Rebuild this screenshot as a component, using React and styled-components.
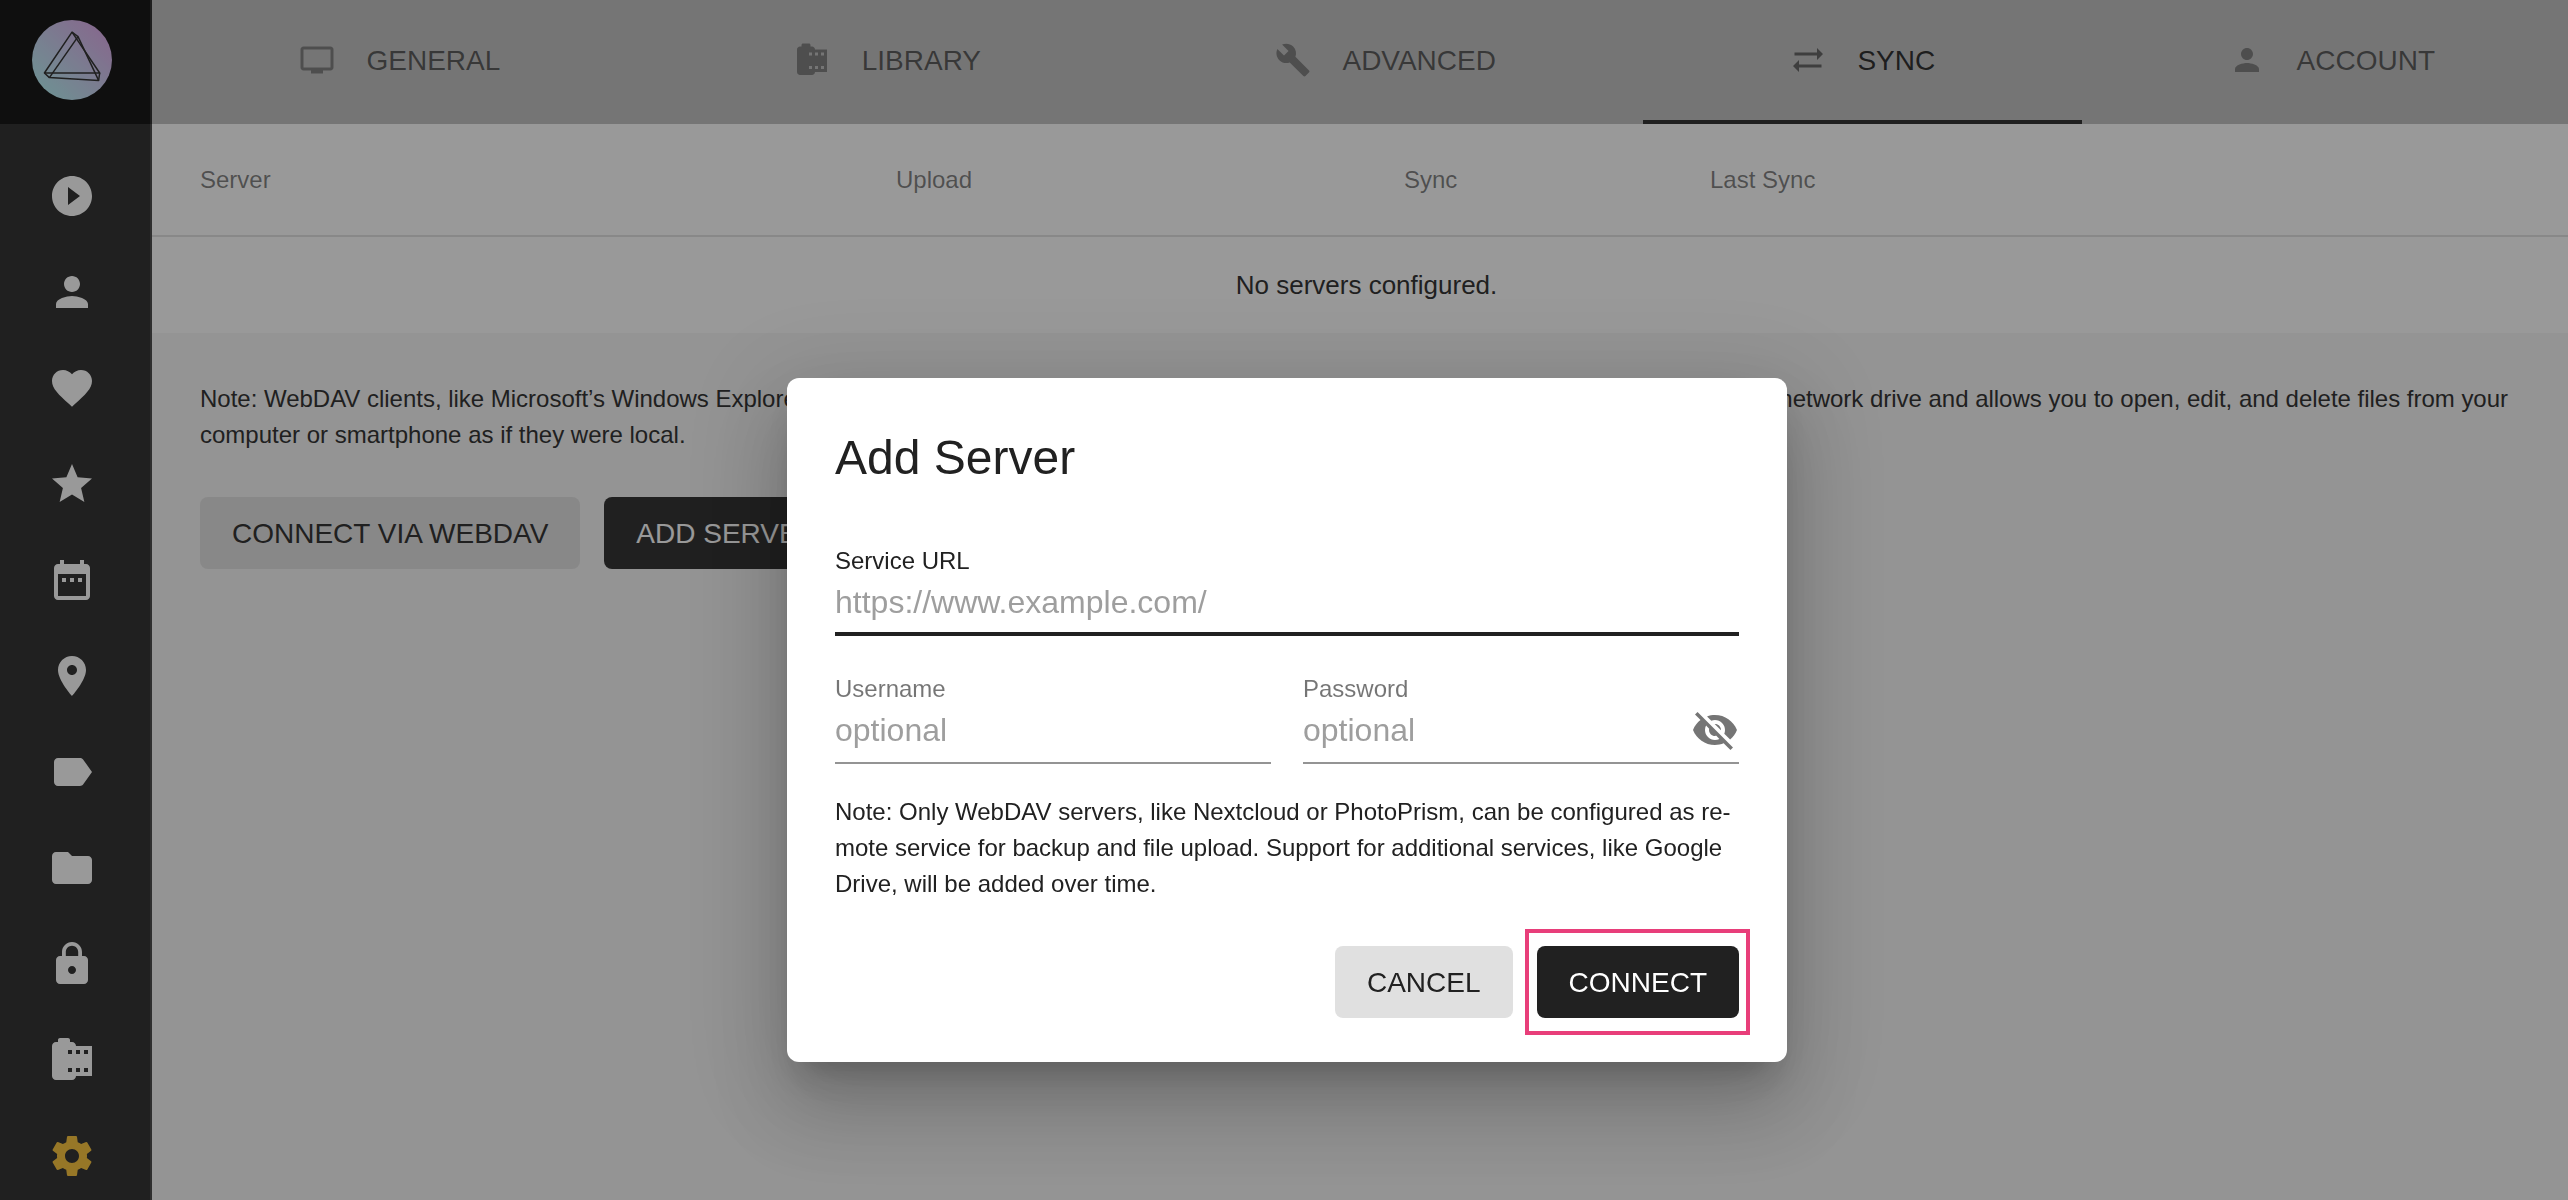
import React from "react";
import styled, { createGlobalStyle } from "styled-components";

const GlobalStyle = createGlobalStyle`
  * { box-sizing: border-box; }
  html, body { margin: 0; padding: 0; }
  body {
    width: 2568px;
    height: 1200px;
    overflow: hidden;
    font-family: "Liberation Sans", Arial, Helvetica, sans-serif;
    color: #212121;
    background: #f5f5f5;
  }
`;

const paths = {
  play: "M12 2C6.48 2 2 6.48 2 12s4.48 10 10 10 10-4.48 10-10S17.52 2 12 2zm-2 14.5v-9l6 4.5-6 4.5z",
  person: "M12 12c2.21 0 4-1.79 4-4s-1.79-4-4-4-4 1.79-4 4 1.79 4 4 4zm0 2c-2.67 0-8 1.34-8 4v2h16v-2c0-2.66-5.33-4-8-4z",
  favorite: "M12 21.35l-1.45-1.32C5.4 15.36 2 12.28 2 8.5 2 5.42 4.42 3 7.5 3c1.74 0 3.41.81 4.5 2.09C13.09 3.81 14.76 3 16.5 3 19.58 3 22 5.42 22 8.5c0 3.78-3.4 6.86-8.55 11.54L12 21.35z",
  star: "M12 17.27L18.18 21l-1.64-7.03L22 9.24l-7.19-.61L12 2 9.19 8.63 2 9.24l5.46 4.73L5.82 21z",
  calendar: "M9 11H7v2h2v-2zm4 0h-2v2h2v-2zm4 0h-2v2h2v-2zm2-7h-1V2h-2v2H8V2H6v2H5c-1.11 0-1.99.9-1.99 2L3 20c0 1.1.89 2 2 2h14c1.1 0 2-.9 2-2V6c0-1.1-.9-2-2-2zm0 16H5V9h14v11z",
  place: "M12 2C8.13 2 5 5.13 5 9c0 5.25 7 13 7 13s7-7.75 7-13c0-3.87-3.13-7-7-7zm0 9.5c-1.38 0-2.5-1.12-2.5-2.5s1.12-2.5 2.5-2.5 2.5 1.12 2.5 2.5-1.12 2.5-2.5 2.5z",
  label: "M17.63 5.84C17.27 5.33 16.67 5 16 5L5 5.01C3.9 5.01 3 5.9 3 7v10c0 1.1.9 1.99 2 1.99L16 19c.67 0 1.27-.33 1.63-.84L22 12l-4.37-6.16z",
  folder: "M10 4H4c-1.1 0-1.99.9-1.99 2L2 18c0 1.1.9 2 2 2h16c1.1 0 2-.9 2-2V8c0-1.1-.9-2-2-2h-8l-2-2z",
  lock: "M18 8h-1V6c0-2.76-2.24-5-5-5S7 3.24 7 6v2H6c-1.1 0-2 .9-2 2v10c0 1.1.9 2 2 2h12c1.1 0 2-.9 2-2V10c0-1.1-.9-2-2-2zm-6 9c-1.1 0-2-.9-2-2s.9-2 2-2 2 .9 2 2-.9 2-2 2zm3.1-9H8.9V6c0-1.71 1.39-3.1 3.1-3.1 1.71 0 3.1 1.39 3.1 3.1v2z",
  cameraRoll: "M14 5c0-1.1-.9-2-2-2h-1V2c0-.55-.45-1-1-1H6c-.55 0-1 .45-1 1v1H4c-1.1 0-2 .9-2 2v15c0 1.1.9 2 2 2h8c1.1 0 2-.9 2-2h8V5h-8zm-2 13h-2v-2h2v2zm0-9h-2V7h2v2zm4 9h-2v-2h2v2zm0-9h-2V7h2v2zm4 9h-2v-2h2v2zm0-9h-2V7h2v2z",
  settings: "M19.43 12.98c.04-.32.07-.64.07-.98s-.03-.66-.07-.98l2.11-1.65c.19-.15.24-.42.12-.64l-2-3.46c-.12-.22-.39-.3-.61-.22l-2.49 1c-.52-.4-1.08-.73-1.69-.98l-.38-2.65C14.46 2.18 14.25 2 14 2h-4c-.25 0-.46.18-.49.42l-.38 2.65c-.61.25-1.17.59-1.69.98l-2.49-1c-.23-.09-.49 0-.61.22l-2 3.46c-.13.22-.07.49.12.64l2.11 1.65c-.04.32-.07.65-.07.98s.03.66.07.98l-2.11 1.65c-.19.15-.24.42-.12.64l2 3.46c.12.22.39.3.61.22l2.49-1c.52.4 1.08.73 1.69.98l.38 2.65c.03.24.24.42.49.42h4c.25 0 .46-.18.49-.42l.38-2.65c.61-.25 1.17-.59 1.69-.98l2.49 1c.23.09.49 0 .61-.22l2-3.46c.12-.22.07-.49-.12-.64l-2.11-1.65zM12 15.5c-1.93 0-3.5-1.57-3.5-3.5s1.57-3.5 3.5-3.5 3.5 1.57 3.5 3.5-1.57 3.5-3.5 3.5z",
  tv: "M21 3H3c-1.1 0-2 .9-2 2v12c0 1.1.9 2 2 2h5v2h8v-2h5c1.1 0 1.99-.9 1.99-2L23 5c0-1.1-.9-2-2-2zm0 14H3V5h18v12z",
  build: "M22.7 19l-9.1-9.1c.9-2.3.4-5-1.5-6.9-2-2-5-2.4-7.4-1.3L9 6 6 9 1.6 4.7C.4 7.1.9 10.1 2.9 12.1c1.9 1.9 4.6 2.4 6.9 1.5l9.1 9.1c.4.4 1 .4 1.4 0l2.3-2.3c.5-.4.5-1.1.1-1.4z",
  syncAlt: "M22 8l-4-4v3H3v2h15v3l4-4zM2 16l4 4v-3h15v-2H6v-3l-4 4z",
  visibilityOff: "M12 7c2.76 0 5 2.24 5 5 0 .65-.13 1.26-.36 1.83l2.92 2.92c1.51-1.26 2.7-2.89 3.43-4.75-1.73-4.39-6-7.5-11-7.5-1.4 0-2.74.25-3.98.7l2.16 2.16C10.74 7.13 11.35 7 12 7zM2 4.27l2.28 2.28.46.46C3.08 8.3 1.78 10.02 1 12c1.73 4.39 6 7.5 11 7.5 1.55 0 3.03-.3 4.38-.84l.42.42L19.73 22 21 20.73 3.27 3 2 4.27zM7.53 9.8l1.55 1.55c-.05.21-.08.43-.08.65 0 1.66 1.34 3 3 3 .22 0 .44-.03.65-.08l1.55 1.55c-.67.33-1.41.53-2.2.53-2.76 0-5-2.24-5-5 0-.79.2-1.53.53-2.2zm4.31-.78l3.15 3.15.02-.16c0-1.66-1.34-3-3-3l-.17.01z",
};

const IconSvg = styled.svg`
  display: block;
  flex: none;
  width: ${(p) => p.$size}px;
  height: ${(p) => p.$size}px;
  fill: currentColor;
`;

const Icon = ({ name, size = 48 }) => (
  <IconSvg viewBox="0 0 24 24" $size={size}>
    <path d={paths[name]} />
  </IconSvg>
);

const Shell = styled.div`
  display: flex;
  width: 2568px;
  height: 1200px;
  overflow: hidden;
`;

const Sidebar = styled.nav`
  flex: none;
  width: 152px;
  height: 1200px;
  overflow: hidden;
  background: #212121;
`;

const Brand = styled.div`
  height: 124px;
  padding: 20px 0 0 32px;
  background: #000;
  border-right: 2px solid rgba(255, 255, 255, 0.12);
`;

const BrandLogo = styled.svg`
  display: block;
  width: 80px;
  height: 80px;
`;

const NavList = styled.div`
  height: 1076px;
  padding-top: 24px;
  border-right: 2px solid rgba(255, 255, 255, 0.12);
`;

const NavItem = styled.a`
  display: flex;
  align-items: center;
  height: 96px;
  padding-left: 48px;
  color: ${(p) => (p.$active ? "#fbc02d" : "#fff")};
`;

const Main = styled.main`
  flex: 1;
  min-width: 0;
  overflow: hidden;
`;

const Tabs = styled.div`
  display: flex;
  width: 2430px;
  height: 124px;
  background: #bdbdbd;
`;

const Tab = styled.a`
  flex: 1 1 auto;
  display: flex;
  align-items: center;
  justify-content: center;
  gap: 31.5px;
  padding: 0 24px 4px;
  font-size: 28px;
  line-height: 32px;
  color: rgba(0, 0, 0, ${(p) => (p.$active ? 0.87 : 0.61)});
  box-shadow: ${(p) => (p.$active ? "inset 0 -4px #212121" : "none")};

  svg {
    color: rgba(0, 0, 0, ${(p) => (p.$active ? 0.54 : 0.38)});
  }
`;

const TabText = styled.span`
  padding-top: 2px;
`;

const Table = styled.section`
  background: #fff;
`;

const TableHead = styled.div`
  display: grid;
  grid-template-columns: 696px 508px 306px 1fr;
  align-items: center;
  height: 113px;
  padding-left: 48px;
  border-bottom: 2px solid rgba(0, 0, 0, 0.12);
  font-size: 24px;
  color: rgba(0, 0, 0, 0.54);
`;

const EmptyRow = styled.div`
  display: flex;
  align-items: center;
  justify-content: center;
  height: 96px;
  padding-left: 13px;
  font-size: 26px;
`;

const Body = styled.section`
  padding: 48px;
`;

const Note = styled.p`
  margin: 0;
  font-size: 24px;
  line-height: 36px;
`;

const Line = styled.span`
  display: block;
  white-space: nowrap;
  letter-spacing: ${(p) => (p.$tight ? "-0.015px" : "normal")};
`;

const Actions = styled.div`
  display: flex;
  justify-content: ${(p) => (p.$end ? "flex-end" : "flex-start")};
  gap: 24px;
  margin-top: 44px;
`;

const Button = styled.button`
  height: 72px;
  padding: 2px 32px 0;
  border: 0;
  border-radius: 8px;
  font: 28px "Liberation Sans", Arial, Helvetica, sans-serif;
  white-space: nowrap;
  color: ${(p) => (p.$dark ? "#fff" : "#212121")};
  background: ${(p) => (p.$dark ? "#212121" : "#e0e0e0")};
`;

const Overlay = styled.div`
  position: fixed;
  inset: 0;
  display: flex;
  align-items: flex-start;
  justify-content: center;
  padding: 378px 0 0 6px;
  background: rgba(33, 33, 33, 0.46);
`;

const Dialog = styled.form`
  width: 1000px;
  height: 684px;
  padding: 48px;
  border-radius: 12px;
  background: #fff;
  box-shadow: 0 22px 30px -14px rgba(0, 0, 0, 0.2),
    0 48px 76px 6px rgba(0, 0, 0, 0.14), 0 18px 92px 16px rgba(0, 0, 0, 0.12);
`;

const Title = styled.h1`
  margin: 0 0 46px;
  font-size: 48px;
  line-height: 64px;
  font-weight: 400;
`;

const Fields = styled.div`
  display: grid;
  grid-template-columns: 1fr 1fr;
  column-gap: 32px;
`;

const Field = styled.label`
  display: flex;
  flex-direction: column;
  grid-column: ${(p) => (p.$wide ? "1 / -1" : "auto")};
  height: ${(p) => (p.$wide ? 128 : 130)}px;
`;

const FieldLabel = styled.span`
  height: 40px;
  padding-top: 7px;
  font-size: 24px;
  line-height: 36px;
  color: ${(p) => (p.$focused ? "#212121" : "rgba(0, 0, 0, 0.54)")};
`;

const InputRow = styled.span`
  display: flex;
  align-items: center;
  justify-content: space-between;
  height: 60px;
  padding-bottom: ${(p) => (p.$focused ? 4 : 6)}px;
  border-bottom: ${(p) => (p.$focused ? "4px solid #212121" : "2px solid #949494")};
  color: rgba(0, 0, 0, 0.54);
`;

const Placeholder = styled.span`
  font-size: 32px;
  line-height: 40px;
  color: #9e9e9e;
`;

const Highlighted = styled.div`
  position: relative;
`;

const Highlight = styled.span`
  position: absolute;
  inset: -17px -11px -17px -12px;
  border: 4px solid #e83e7a;
`;

const Logo = () => (
  <BrandLogo viewBox="0 0 80 80">
    <defs>
      <linearGradient id="brand" x1="0.15" y1="0.85" x2="0.85" y2="0.15">
        <stop offset="0" stopColor="#b4ebf3" />
        <stop offset="1" stopColor="#d9abea" />
      </linearGradient>
    </defs>
    <circle cx="40" cy="40" r="40" fill="url(#brand)" />
    <g fill="none" stroke="#212121" strokeWidth="1.5" strokeLinejoin="round">
      <path d="M40 12.2L12.4 53H67.7Z" />
      <path d="M46 16.6L17.4 57.6L66.6 60.4Z" />
      <path d="M40 12.2L46 16.6M12.4 53L17.4 57.6M67.7 53L66.6 60.4" />
    </g>
  </BrandLogo>
);

const nav = ["play", "person", "favorite", "star", "calendar", "place", "label", "folder", "lock", "cameraRoll", "settings"];

const tabs = [
  ["tv", "GENERAL"],
  ["cameraRoll", "LIBRARY"],
  ["build", "ADVANCED"],
  ["syncAlt", "SYNC"],
  ["person", "ACCOUNT"],
];

export default function App() {
  return (
    <>
      <GlobalStyle />
      <Shell>
        <Sidebar>
          <Brand>
            <Logo />
          </Brand>
          <NavList>
            {nav.map((name) => (
              <NavItem key={name} $active={name === "settings"}>
                <Icon name={name} />
              </NavItem>
            ))}
          </NavList>
        </Sidebar>
        <Main>
          <Tabs>
            {tabs.map(([icon, text]) => (
              <Tab key={text} $active={text === "SYNC"}>
                <Icon name={icon} size={36} />
                <TabText>{text}</TabText>
              </Tab>
            ))}
          </Tabs>
          <Table>
            <TableHead>
              <span>Server</span>
              <span>Upload</span>
              <span>Sync</span>
              <span>Last Sync</span>
            </TableHead>
            <EmptyRow>No servers configured.</EmptyRow>
          </Table>
          <Body>
            <Note>
              <Line $tight>
                Note: WebDAV clients, like Microsoft’s Windows Explorer or macOS Finder, can connect directly to
                PhotoPrism. This mounts the originals folder as a network drive and allows you to open, edit, and
                delete files from your
              </Line>
              <Line>computer or smartphone as if they were local.</Line>
            </Note>
            <Actions>
              <Button>CONNECT VIA WEBDAV</Button>
              <Button $dark>ADD SERVER</Button>
            </Actions>
          </Body>
        </Main>
      </Shell>
      <Overlay>
        <Dialog>
          <Title>Add Server</Title>
          <Fields>
            <Field $wide>
              <FieldLabel $focused>Service URL</FieldLabel>
              <InputRow $focused>
                <Placeholder>https://www.example.com/</Placeholder>
              </InputRow>
            </Field>
            <Field>
              <FieldLabel>Username</FieldLabel>
              <InputRow>
                <Placeholder>optional</Placeholder>
              </InputRow>
            </Field>
            <Field>
              <FieldLabel>Password</FieldLabel>
              <InputRow>
                <Placeholder>optional</Placeholder>
                <Icon name="visibilityOff" />
              </InputRow>
            </Field>
          </Fields>
          <Note>
            <Line>Note: Only WebDAV servers, like Nextcloud or PhotoPrism, can be configured as re-</Line>
            <Line>mote service for backup and file upload. Support for additional services, like Google</Line>
            <Line>Drive, will be added over time.</Line>
          </Note>
          <Actions $end>
            <Button type="button">CANCEL</Button>
            <Highlighted>
              <Button type="button" $dark>CONNECT</Button>
              <Highlight />
            </Highlighted>
          </Actions>
        </Dialog>
      </Overlay>
    </>
  );
}
